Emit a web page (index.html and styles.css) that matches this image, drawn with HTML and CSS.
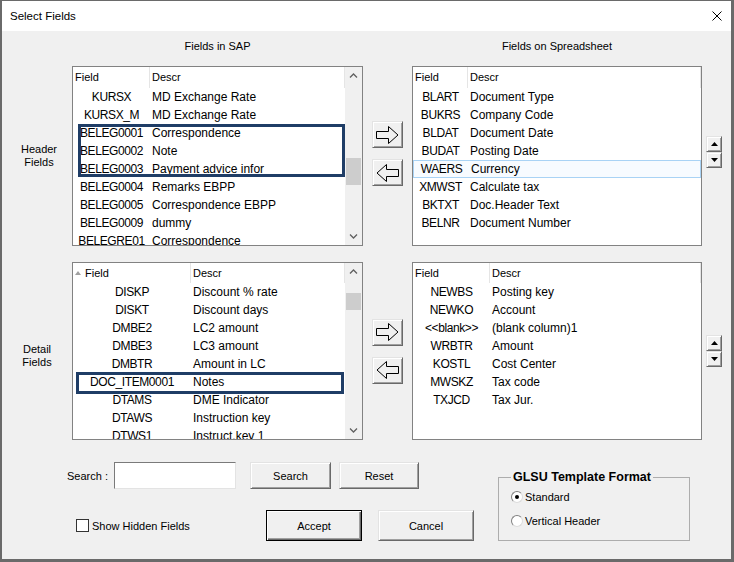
FILE: index.html
```html
<!DOCTYPE html>
<html lang="en">
<head>
  <meta charset="UTF-8" />
  <title>Select Fields</title>
  <link rel="stylesheet" href="styles.css">
</head>
<body>
  <div class="dialog">
    <div class="titlebar">
      <span>Select Fields</span>
      <svg class="close" width="10" height="10" viewBox="0 0 10 10"><path d="M0.5 0.5L9.5 9.5M9.5 0.5L0.5 9.5" stroke="#000" stroke-width="1"/></svg>
    </div>

    <div class="cols col-labels">
      <div></div>
      <div>Fields in SAP</div>
      <div></div>
      <div>Fields on Spreadsheet</div>
      <div></div>
    </div>

    <div class="cols section head">
      <div class="side-label">Header<br>Fields</div>

      <div class="list sap-head">
        <div class="list-main">
          <div class="list-head"><span class="col-f">Field</span><span class="col-d">Descr</span></div>
          <div class="row"><span class="col-f">KURSX</span><span class="col-d">MD Exchange Rate</span></div>
          <div class="row"><span class="col-f">KURSX_M</span><span class="col-d">MD Exchange Rate</span></div>
          <div class="mark">
            <div class="row"><span class="col-f">BELEG0001</span><span class="col-d">Correspondence</span></div>
            <div class="row"><span class="col-f">BELEG0002</span><span class="col-d">Note</span></div>
            <div class="row"><span class="col-f">BELEG0003</span><span class="col-d">Payment advice infor</span></div>
          </div>
          <div class="row"><span class="col-f">BELEG0004</span><span class="col-d">Remarks EBPP</span></div>
          <div class="row"><span class="col-f">BELEG0005</span><span class="col-d">Correspondence EBPP</span></div>
          <div class="row"><span class="col-f">BELEG0009</span><span class="col-d">dummy</span></div>
          <div class="row"><span class="col-f">BELEGRE01</span><span class="col-d">Correspondence</span></div>
        </div>
        <div class="scroll">
          <div class="scroll-btn"><svg width="9" height="5" viewBox="0 0 9 5"><path d="M1 4.5L4.5 1L8 4.5" fill="none" stroke="#606060" stroke-width="1.3"/></svg></div>
          <div class="scroll-track"><div class="thumb thumb-head"></div></div>
          <div class="scroll-btn"><svg width="9" height="5" viewBox="0 0 9 5"><path d="M1 0.5L4.5 4L8 0.5" fill="none" stroke="#606060" stroke-width="1.3"/></svg></div>
        </div>
      </div>

      <div class="arrows">
        <button class="move-btn"><svg width="23" height="18" viewBox="0 0 23 18"><path d="M0.5 5.5H12.5V0.5L22 9L12.5 17.5V12.5H0.5Z" fill="none" stroke="#000"/></svg></button>
        <button class="move-btn"><svg width="23" height="18" viewBox="0 0 23 18"><path d="M22.5 5.5H10.5V0.5L1 9L10.5 17.5V12.5H22.5Z" fill="none" stroke="#000"/></svg></button>
      </div>

      <div class="list sheet-head">
        <div class="list-main">
          <div class="list-head"><span class="col-f">Field</span><span class="col-d">Descr</span></div>
          <div class="row"><span class="col-f">BLART</span><span class="col-d">Document Type</span></div>
          <div class="row"><span class="col-f">BUKRS</span><span class="col-d">Company Code</span></div>
          <div class="row"><span class="col-f">BLDAT</span><span class="col-d">Document Date</span></div>
          <div class="row"><span class="col-f">BUDAT</span><span class="col-d">Posting Date</span></div>
          <div class="row focus"><span class="col-f">WAERS</span><span class="col-d">Currency</span></div>
          <div class="row"><span class="col-f">XMWST</span><span class="col-d">Calculate tax</span></div>
          <div class="row"><span class="col-f">BKTXT</span><span class="col-d">Doc.Header Text</span></div>
          <div class="row"><span class="col-f">BELNR</span><span class="col-d">Document Number</span></div>
        </div>
      </div>

      <div class="spin">
        <button class="spin-btn"><svg width="7" height="4" viewBox="0 0 7 4"><path d="M0 4H7L3.5 0Z"/></svg></button>
        <button class="spin-btn"><svg width="7" height="4" viewBox="0 0 7 4"><path d="M0 0H7L3.5 4Z"/></svg></button>
      </div>
    </div>

    <div class="cols section detail">
      <div class="side-label">Detail<br>Fields</div>

      <div class="list sap-detail">
        <div class="list-main">
          <div class="list-head"><span class="col-f"><svg class="sort" width="6" height="4" viewBox="0 0 6 4"><path d="M0 4H6L3 0Z" fill="#a0a0a0"/></svg>Field</span><span class="col-d">Descr</span></div>
          <div class="row"><span class="col-f">DISKP</span><span class="col-d">Discount % rate</span></div>
          <div class="row"><span class="col-f">DISKT</span><span class="col-d">Discount days</span></div>
          <div class="row"><span class="col-f">DMBE2</span><span class="col-d">LC2 amount</span></div>
          <div class="row"><span class="col-f">DMBE3</span><span class="col-d">LC3 amount</span></div>
          <div class="row"><span class="col-f">DMBTR</span><span class="col-d">Amount in LC</span></div>
          <div class="row mark-row"><span class="col-f">DOC_ITEM0001</span><span class="col-d">Notes</span></div>
          <div class="row"><span class="col-f">DTAMS</span><span class="col-d">DME Indicator</span></div>
          <div class="row"><span class="col-f">DTAWS</span><span class="col-d">Instruction key</span></div>
          <div class="row"><span class="col-f">DTWS1</span><span class="col-d">Instruct.key 1</span></div>
        </div>
        <div class="scroll">
          <div class="scroll-btn"><svg width="9" height="5" viewBox="0 0 9 5"><path d="M1 4.5L4.5 1L8 4.5" fill="none" stroke="#606060" stroke-width="1.3"/></svg></div>
          <div class="scroll-track"><div class="thumb thumb-detail"></div></div>
          <div class="scroll-btn"><svg width="9" height="5" viewBox="0 0 9 5"><path d="M1 0.5L4.5 4L8 0.5" fill="none" stroke="#606060" stroke-width="1.3"/></svg></div>
        </div>
      </div>

      <div class="arrows">
        <button class="move-btn"><svg width="23" height="18" viewBox="0 0 23 18"><path d="M0.5 5.5H12.5V0.5L22 9L12.5 17.5V12.5H0.5Z" fill="none" stroke="#000"/></svg></button>
        <button class="move-btn"><svg width="23" height="18" viewBox="0 0 23 18"><path d="M22.5 5.5H10.5V0.5L1 9L10.5 17.5V12.5H22.5Z" fill="none" stroke="#000"/></svg></button>
      </div>

      <div class="list sheet-detail">
        <div class="list-main">
          <div class="list-head"><span class="col-f">Field</span><span class="col-d">Descr</span></div>
          <div class="row"><span class="col-f">NEWBS</span><span class="col-d">Posting key</span></div>
          <div class="row"><span class="col-f">NEWKO</span><span class="col-d">Account</span></div>
          <div class="row"><span class="col-f">&lt;&lt;blank&gt;&gt;</span><span class="col-d">(blank column)1</span></div>
          <div class="row"><span class="col-f">WRBTR</span><span class="col-d">Amount</span></div>
          <div class="row"><span class="col-f">KOSTL</span><span class="col-d">Cost Center</span></div>
          <div class="row"><span class="col-f">MWSKZ</span><span class="col-d">Tax code</span></div>
          <div class="row"><span class="col-f">TXJCD</span><span class="col-d">Tax Jur.</span></div>
        </div>
      </div>

      <div class="spin">
        <button class="spin-btn"><svg width="7" height="4" viewBox="0 0 7 4"><path d="M0 4H7L3.5 0Z"/></svg></button>
        <button class="spin-btn"><svg width="7" height="4" viewBox="0 0 7 4"><path d="M0 0H7L3.5 4Z"/></svg></button>
      </div>
    </div>

    <div class="bottom">
      <div class="bottom-left">
        <div class="search-row">
          <span class="search-label">Search :</span>
          <input type="text" class="search-input" />
          <button class="btn btn-search">Search</button>
          <button class="btn btn-reset">Reset</button>
        </div>
        <div class="action-row">
          <div class="check"><span class="check-box"></span>Show Hidden Fields</div>
          <button class="btn btn-accept">Accept</button>
          <button class="btn btn-cancel">Cancel</button>
        </div>
      </div>

      <fieldset class="format">
        <legend>GLSU Template Format</legend>
        <div class="radio-row"><span class="radio on"></span>Standard</div>
        <div class="radio-row"><span class="radio"></span>Vertical Header</div>
      </fieldset>
    </div>
  </div>
</body>
</html>
```

FILE: styles.css
```css
* {
  box-sizing: border-box;
}
body {
  margin: 0;
  font-family: "Liberation Sans", Arial, sans-serif;
  font-size: 11px;
  color: #000;
}
.dialog {
  width: 734px;
  height: 562px;
  border: solid #6a6a6a;
  border-width: 1px 3px 3px 2px;
  background: #f0f0f0;
  display: flex;
  flex-direction: column;
}
.titlebar {
  height: 30px;
  flex: none;
  background: #fff;
  display: flex;
  align-items: center;
  justify-content: space-between;
  padding: 0 9px 0 8px;
  font-size: 11.5px;
}

/* five columns: side label, SAP list, move buttons, sheet list, spin */
.cols {
  display: grid;
  grid-template-columns: 70px 291px 49px 290px 1fr;
  flex: none;
}
.col-labels {
  height: 35px;
  padding-top: 8px;
  line-height: 14px;
  text-align: center;
}
.section {
  height: 180px;
}
.section.detail {
  height: 178px;
  margin-top: 16px;
}
.side-label {
  align-self: center;
  text-align: center;
  line-height: 13px;
}
.head .side-label {
  padding-left: 4px;
}
.detail .side-label {
  margin-top: 9px;
}

.list {
  display: flex;
  background: #fff;
  border: 1px solid #828282;
  overflow: hidden;
}
.list-main {
  flex: 1;
  overflow: hidden;
}
.list-head {
  display: flex;
  height: 20px;
  line-height: 20px;
}
.head .list-head {
  height: 21px;
  line-height: 21px;
}
.list-head .col-f {
  text-align: left;
  padding-left: 2px;
  border-right: 1px solid #e5e5e5;
}
.list-head .col-d {
  flex: 1;
  border-right: 1px solid #e5e5e5;
}
.sort {
  margin: 0 4px 2px 0;
}
.row {
  display: flex;
  height: 18px;
  line-height: 18px;
  font-size: 12px;
  white-space: nowrap;
}
.row .col-f {
  letter-spacing: -0.4px;
}
.col-f {
  flex: none;
  text-align: center;
}
.col-d {
  padding-left: 2px;
}
.sap-head .col-f { width: 77px; }
.sheet-head .col-f { width: 55px; }
.sap-detail .col-f { width: 118px; }
.sheet-detail .col-f { width: 77px; }

.row.focus {
  border: 1px solid #a9d3f5;
  background: #f7fbff;
  line-height: 16px;
}

/* annotation boxes drawn over the rows */
.mark, .mark-row {
  position: relative;
}
.mark::after, .mark-row::after {
  content: "";
  position: absolute;
  border: 3px solid #1f3d66;
}
.mark::after {
  left: 5px; right: 0; top: 0; bottom: 1px;
}
.mark-row::after {
  left: 3px; right: 1px; top: -1px; bottom: -3px;
}

.scroll {
  width: 17px;
  flex: none;
  background: #f0f0f0;
  display: flex;
  flex-direction: column;
}
.scroll-btn {
  height: 17px;
  display: flex;
  align-items: center;
  justify-content: center;
}
.scroll-track {
  flex: 1;
}
.thumb {
  width: 15px;
  margin-left: 1px;
  background: #cdcdcd;
}
.thumb-head { margin-top: 74px; height: 27px; }
.thumb-detail { margin-top: 13px; height: 17px; }

button {
  font-family: inherit;
  font-size: 11px;
  color: #000;
  padding: 0;
  background: #f0f0f0;
  border: 1px solid;
  border-color: #e3e3e3 #696969 #696969 #e3e3e3;
  box-shadow: inset 1px 1px #fff, inset -1px -1px #a0a0a0;
  display: flex;
  align-items: center;
  justify-content: center;
}
.arrows {
  display: flex;
  flex-direction: column;
  align-items: center;
  justify-content: center;
  gap: 11px;
}
.head .arrows {
  padding-bottom: 5px;
}
.move-btn {
  width: 31px;
  height: 27px;
}
.spin {
  display: flex;
  flex-direction: column;
  justify-content: center;
  padding-left: 4px;
}
.head .spin {
  padding-bottom: 9px;
}
.spin-btn {
  width: 16px;
  height: 16px;
}

.bottom {
  display: flex;
  padding-top: 22px;
}
.bottom-left {
  width: 496px;
}
.search-row {
  display: flex;
  align-items: center;
  height: 27px;
  padding-left: 65px;
}
.search-label {
  width: 47px;
}
.search-input {
  width: 122px;
  height: 27px;
  border: 1px solid;
  border-color: #7a7a7a #e3e3e3 #e3e3e3 #7a7a7a;
  background: #fff;
  outline: none;
}
.btn { height: 27px; }
.btn-search { width: 81px; margin-left: 14px; }
.btn-reset { width: 80px; margin-left: 8px; }

.action-row {
  display: flex;
  align-items: center;
  height: 31px;
  margin-top: 21px;
}
.check {
  display: flex;
  align-items: center;
  width: 264px;
  padding-left: 74px;
}
.check-box {
  width: 13px;
  height: 13px;
  border: 1px solid #333;
  background: #fff;
  margin-right: 3px;
}
.btn-accept, .btn-cancel {
  width: 96px;
  height: 31px;
}
.btn-accept {
  border-color: #000;
  box-shadow: inset 1px 1px #fff, inset -1px -1px #696969, inset -2px -2px #a0a0a0;
}
.btn-cancel {
  margin-left: 16px;
}

.format {
  width: 192px;
  height: 71px;
  margin: 8px 0 0 0;
  padding: 3px 12px 0 12px;
  border: 1px solid #adadad;
  min-width: 0;
}
.format legend {
  font-size: 12.5px;
  font-weight: bold;
  line-height: 15px;
  padding: 0 2px;
}
.radio-row {
  display: flex;
  align-items: center;
  height: 18px;
}
.radio-row + .radio-row {
  margin-top: 6px;
}
.radio {
  width: 12px;
  height: 12px;
  border-radius: 50%;
  border: 1px solid;
  border-color: #808080 #dcdcdc #dcdcdc #808080;
  background: #fff;
  margin-right: 2px;
  display: flex;
  align-items: center;
  justify-content: center;
}
.radio.on::after {
  content: "";
  width: 4px;
  height: 4px;
  border-radius: 50%;
  background: #000;
}
```
